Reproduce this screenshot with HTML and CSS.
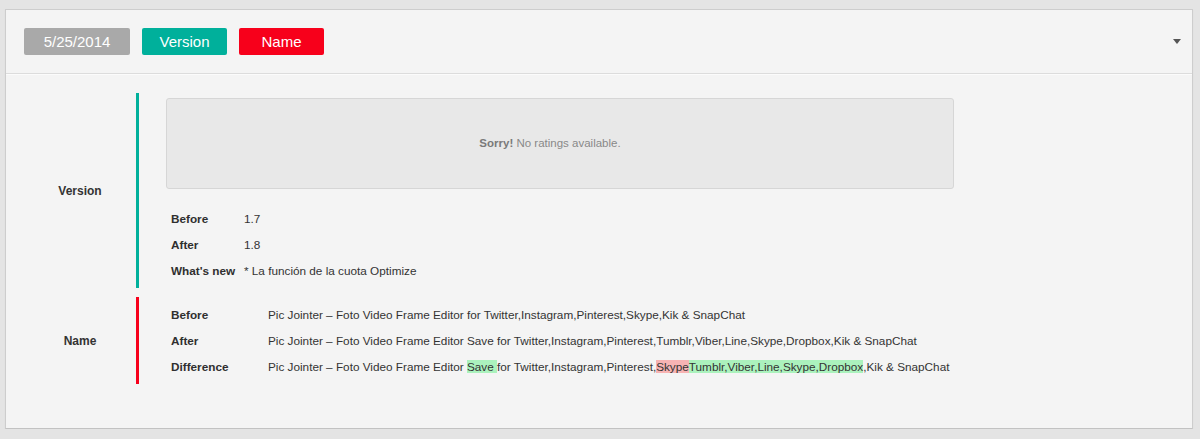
FILE: index.html
```html
<!DOCTYPE html>
<html>
<head>
<meta charset="utf-8">
<link rel="stylesheet" href="styles.css">
</head>
<body>
<div class="panel">
  <div class="header">
    <span class="badge badge-date">5/25/2014</span>
    <span class="badge badge-version">Version</span>
    <span class="badge badge-name">Name</span>
    <span class="caret"></span>
  </div>
  <div class="body">
    <div class="section">
      <div class="section-label">Version</div>
      <div class="section-content bar-teal">
        <div class="ratings"><b>Sorry!</b> No ratings available.</div>
        <table class="rows rows-version">
          <tr><th>Before</th><td>1.7</td></tr>
          <tr><th>After</th><td>1.8</td></tr>
          <tr><th>What's new</th><td>* La función de la cuota Optimize</td></tr>
        </table>
      </div>
    </div>
    <div class="section section-name">
      <div class="section-label">Name</div>
      <div class="section-content bar-red">
        <table class="rows rows-name">
          <tr><th>Before</th><td>Pic Jointer – Foto Video Frame Editor for Twitter,Instagram,Pinterest,Skype,Kik &amp; SnapChat</td></tr>
          <tr><th>After</th><td>Pic Jointer – Foto Video Frame Editor Save for Twitter,Instagram,Pinterest,Tumblr,Viber,Line,Skype,Dropbox,Kik &amp; SnapChat</td></tr>
          <tr><th>Difference</th><td>Pic Jointer – Foto Video Frame Editor <span class="ins">Save </span>for Twitter,Instagram,Pinterest,<span class="del">Skype</span><span class="ins">Tumblr,Viber,Line,Skype,Dropbox</span>,Kik &amp; SnapChat</td></tr>
        </table>
      </div>
    </div>
  </div>
</div>
</body>
</html>
```
FILE: styles.css
```css
html, body {
  margin: 0;
  padding: 0;
  background: #e4e4e4;
  font-family: "Liberation Sans", Arial, Helvetica, sans-serif;
  color: #333;
}

.panel {
  margin: 9px 7px 0 5px;
  height: 418px;
  background: #f4f4f4;
  border: 1px solid #cdcdcd;
  border-bottom-color: #c2c2c2;
  box-shadow: 0 1px 1px rgba(0, 0, 0, 0.06);
}

.header {
  height: 63px;
  display: flex;
  align-items: center;
  gap: 12px;
  padding: 0 11px 0 18px;
  border-bottom: 1px solid #dcdcdc;
  box-shadow: 0 1px 0 #fbfbfb;
}

.badge {
  height: 27px;
  line-height: 27px;
  border-radius: 2px;
  color: #fff;
  font-size: 15px;
  text-align: center;
}

.badge-date { width: 106px; background: #a9a9a9; }
.badge-version { width: 85px; background: #00b09b; }
.badge-name { width: 85px; background: #f7001b; }

.caret {
  margin-left: auto;
  width: 0;
  height: 0;
  border-left: 4.5px solid transparent;
  border-right: 4.5px solid transparent;
  border-top: 5px solid #555;
  margin-top: -1px;
}

.body {
  padding: 19px 0 0 18px;
}

.section {
  display: flex;
  align-items: center;
}

.section-name {
  margin-top: 9px;
}

.section-label {
  width: 112px;
  text-align: center;
  font-size: 12px;
  font-weight: bold;
  align-self: center;
}

.section-content {
  padding: 5px 0 5px 27px;
  align-self: stretch;
}

.bar-teal { border-left: 3px solid #00b09b; }
.bar-red { border-left: 3px solid #f7001b; padding-top: 4px; }

.ratings {
  box-sizing: border-box;
  width: 788px;
  height: 91px;
  line-height: 89px;
  padding-right: 20px;
  background: #e8e8e8;
  border: 1px solid #d6d6d6;
  border-radius: 3px;
  text-align: center;
  font-size: 11.5px;
  color: #888;
  margin-bottom: 16px;
}

.ratings b { color: #7a7a7a; }

.rows {
  border-collapse: collapse;
  font-size: 11.75px;
}

.rows th {
  text-align: left;
  font-weight: bold;
  padding: 0 0 0 5px;
  height: 26px;
  white-space: nowrap;
  color: #2f2f2f;
}

.rows td {
  padding: 0;
  height: 26px;
  white-space: nowrap;
}

.rows-version th { width: 73px; }
.rows-name th { width: 97px; }

.ins { background: #abf2bd; }
.del { background: #f7b3b3; }
```
